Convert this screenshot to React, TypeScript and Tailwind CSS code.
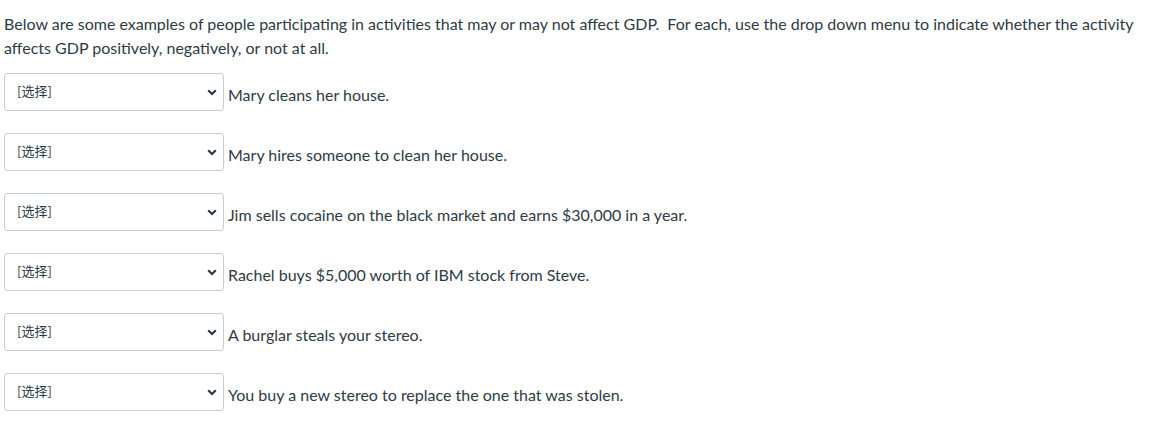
const ITEMS = [
  "Mary cleans her house.",
  "Mary hires someone to clean her house.",
  "Jim sells cocaine on the black market and earns $30,000 in a year.",
  "Rachel buys $5,000 worth of IBM stock from Steve.",
  "A burglar steals your stereo.",
  "You buy a new stereo to replace the one that was stolen.",
];

function Chevron() {
  return (
    <svg width="10" height="7" viewBox="0 0 10 7" className="text-[#2d3b45]">
      <path d="M1.2 1.2 L5 5 L8.8 1.2" fill="none" stroke="currentColor" strokeWidth="2.2" />
    </svg>
  );
}

export default function App() {
  return (
    <div className="bg-white min-h-[433px] px-1 pt-3 text-[#2d3b45] font-['Lato','Noto_Sans','Noto_Sans_CJK_SC',sans-serif] text-[16px]">
      <p className="leading-6">
        Below are some examples of people participating in activities that may or may not affect GDP.&nbsp; For each, use the drop down menu to indicate whether the activity affects GDP positively, negatively, or not at all.
      </p>
      <div className="mt-[13px] flex flex-col gap-[22px]">
        {ITEMS.map((item) => (
          <div key={item} className="flex items-end">
            <div className="flex h-[38px] w-[220px] items-center justify-between rounded-[3px] border border-[#c7cdd1] bg-white pl-3 pr-[6px]">
              <span className="text-[13px] text-[#2d3b45] font-['Noto_Sans_CJK_SC',sans-serif] -mt-[2px]">[选择]</span>
              <Chevron />
            </div>
            <span className="ml-1 mb-[6px] leading-5">{item}</span>
          </div>
        ))}
      </div>
    </div>
  );
}
